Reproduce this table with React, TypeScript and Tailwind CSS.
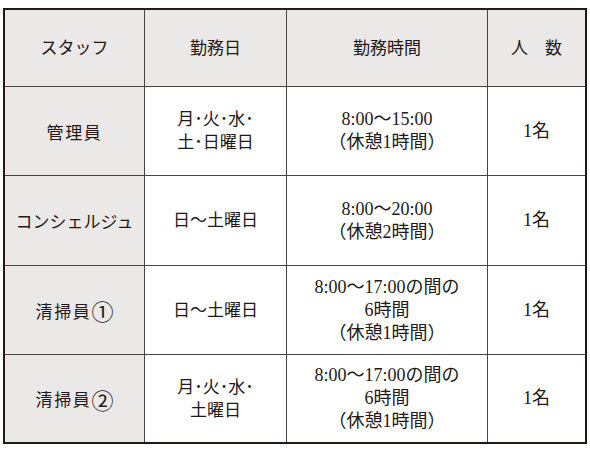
import React from 'react';

type Row = {
  staff: string;
  mark?: string;
  days: string[];
  hours: string[];
  count: string;
  wide?: boolean;
};

const rows: Row[] = [
  { staff: '管理員', days: ['月･火･水･', '土･日曜日'], hours: ['8:00～15:00', '（休憩1時間）'], count: '1名', wide: true },
  { staff: 'コンシェルジュ', days: ['日～土曜日'], hours: ['8:00～20:00', '（休憩2時間）'], count: '1名' },
  { staff: '清掃員', mark: '①', days: ['日～土曜日'], hours: ['8:00～17:00の間の', '6時間', '（休憩1時間）'], count: '1名', wide: true },
  { staff: '清掃員', mark: '②', days: ['月･火･水･', '土曜日'], hours: ['8:00～17:00の間の', '6時間', '（休憩1時間）'], count: '1名', wide: true },
];

const cell = 'flex flex-col items-center justify-center text-center leading-[23px]';

const App: React.FC = () => {
  return (
    <div className="w-[590px] h-[450px] bg-white pt-[8px] pl-[3px] text-[#231815] text-[17px] font-['Liberation_Serif','Noto_Sans_CJK_JP',serif]">
      <div className="w-[584px] border-2 border-[#231815] bg-[#4a4343] grid grid-cols-[139px_141px_200px_97px] grid-rows-[76px_88px_89px_88px_87px] gap-px">
        {/* header */}
        <div className={`${cell} bg-[#ebe9e7]`}>スタッフ</div>
        <div className={`${cell} bg-[#ebe9e7]`}>勤務日</div>
        <div className={`${cell} bg-[#ebe9e7]`}>勤務時間</div>
        <div className={`${cell} bg-[#ebe9e7]`}>人　数</div>

        {rows.map((r, i) => (
          <React.Fragment key={i}>
            <div className={`${cell} bg-[#ebe9e7] font-['Noto_Sans_CJK_JP',sans-serif]`}>
              <span className={`flex items-center ${r.wide ? 'tracking-[0.1em]' : ''}`}>
                {r.staff}
                {r.mark && <span className="text-[22px] leading-none tracking-normal">{r.mark}</span>}
              </span>
            </div>
            <div className={`${cell} bg-white`}>
              {r.days.map((d, j) => (
                <span key={j}>{d}</span>
              ))}
            </div>
            <div className={`${cell} bg-white text-[18px]`}>
              {r.hours.map((h, j) => (
                <span key={j}>{h}</span>
              ))}
            </div>
            <div className={`${cell} bg-white text-[18px]`}>{r.count}</div>
          </React.Fragment>
        ))}
      </div>
    </div>
  );
};

export default App;
